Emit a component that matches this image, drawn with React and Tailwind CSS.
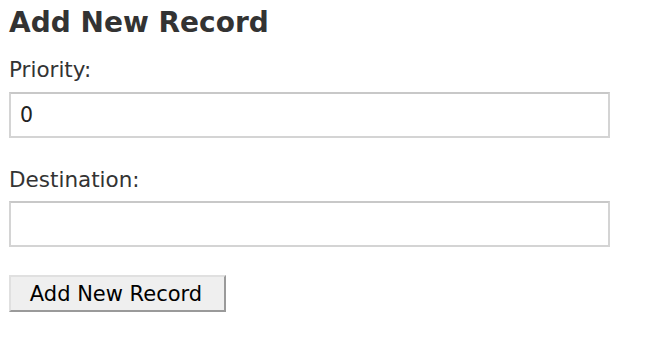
export default function App() {
  return (
    <div className="w-[663px] h-[341px] bg-white pl-[9px] pt-[6px] font-['DejaVu_Sans',sans-serif]">
      <h1 className="text-[28px] leading-[34px] font-bold text-[#333]">Add New Record</h1>
      <div className="mt-[18px] text-[21.5px] leading-[24px] text-[#333]">Priority:</div>
      <input
        className="mt-[10px] block w-[601px] h-[46px] border-2 border-[#d4d4d4] border-t-[#c8c8c8] pl-[9px] text-[20.5px] text-[#222] outline-none"
        defaultValue="0"
      />
      <div className="mt-[30px] text-[21.5px] leading-[24px] text-[#333]">Destination:</div>
      <input
        className="mt-[9px] block w-[601px] h-[46px] border-2 border-[#d4d4d4] border-t-[#c8c8c8] pl-[9px] text-[20.5px] text-[#222] outline-none"
        defaultValue=""
      />
      <button className="mt-[28px] block w-[217px] h-[37px] bg-[#efefef] border-2 border-t-[#e0e0e0] border-l-[#e0e0e0] border-r-[#9a9a9a] border-b-[#9a9a9a] text-[21px] text-black leading-none pt-[1px] pr-[3px]">
        Add New Record
      </button>
    </div>
  );
}
